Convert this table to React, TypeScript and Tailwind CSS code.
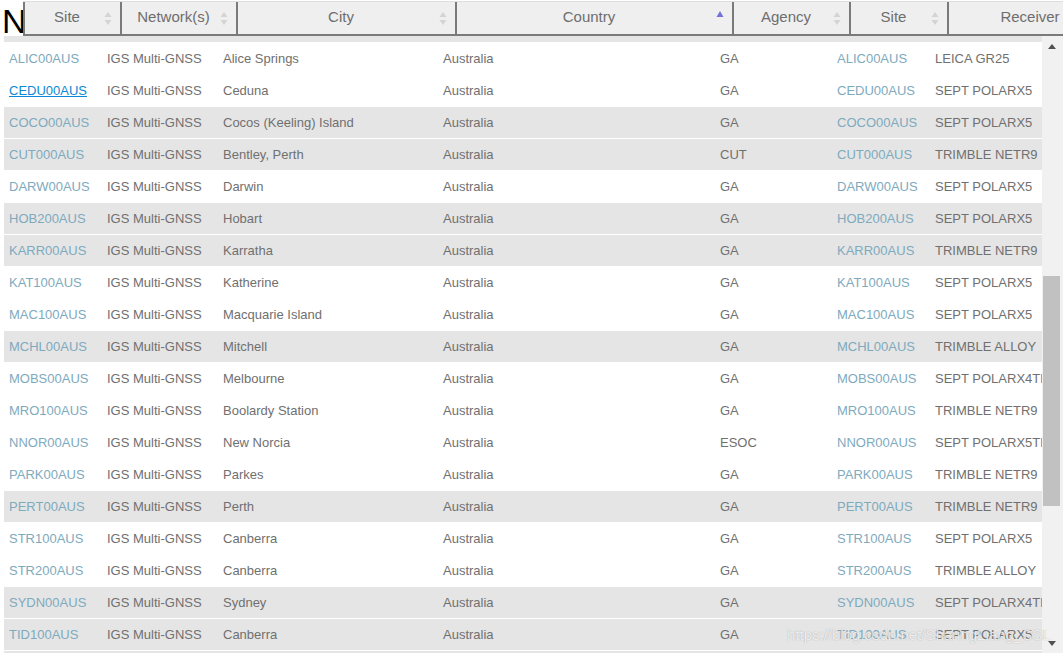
import React from 'react'

type Row = {
  site: string
  city: string
  agency: string
  receiver: string
  shaded: boolean
  hover?: boolean
}

const rows: Row[] = [
  { site: 'ALIC00AUS', city: 'Alice Springs', agency: 'GA', receiver: 'LEICA GR25', shaded: false },
  { site: 'CEDU00AUS', city: 'Ceduna', agency: 'GA', receiver: 'SEPT POLARX5', shaded: false, hover: true },
  { site: 'COCO00AUS', city: 'Cocos (Keeling) Island', agency: 'GA', receiver: 'SEPT POLARX5', shaded: true },
  { site: 'CUT000AUS', city: 'Bentley, Perth', agency: 'CUT', receiver: 'TRIMBLE NETR9', shaded: true },
  { site: 'DARW00AUS', city: 'Darwin', agency: 'GA', receiver: 'SEPT POLARX5', shaded: false },
  { site: 'HOB200AUS', city: 'Hobart', agency: 'GA', receiver: 'SEPT POLARX5', shaded: true },
  { site: 'KARR00AUS', city: 'Karratha', agency: 'GA', receiver: 'TRIMBLE NETR9', shaded: true },
  { site: 'KAT100AUS', city: 'Katherine', agency: 'GA', receiver: 'SEPT POLARX5', shaded: false },
  { site: 'MAC100AUS', city: 'Macquarie Island', agency: 'GA', receiver: 'SEPT POLARX5', shaded: false },
  { site: 'MCHL00AUS', city: 'Mitchell', agency: 'GA', receiver: 'TRIMBLE ALLOY', shaded: true },
  { site: 'MOBS00AUS', city: 'Melbourne', agency: 'GA', receiver: 'SEPT POLARX4TR', shaded: false },
  { site: 'MRO100AUS', city: 'Boolardy Station', agency: 'GA', receiver: 'TRIMBLE NETR9', shaded: false },
  { site: 'NNOR00AUS', city: 'New Norcia', agency: 'ESOC', receiver: 'SEPT POLARX5TR', shaded: false },
  { site: 'PARK00AUS', city: 'Parkes', agency: 'GA', receiver: 'TRIMBLE NETR9', shaded: false },
  { site: 'PERT00AUS', city: 'Perth', agency: 'GA', receiver: 'TRIMBLE NETR9', shaded: true },
  { site: 'STR100AUS', city: 'Canberra', agency: 'GA', receiver: 'SEPT POLARX5', shaded: false },
  { site: 'STR200AUS', city: 'Canberra', agency: 'GA', receiver: 'TRIMBLE ALLOY', shaded: false },
  { site: 'SYDN00AUS', city: 'Sydney', agency: 'GA', receiver: 'SEPT POLARX4TR', shaded: true },
  { site: 'TID100AUS', city: 'Canberra', agency: 'GA', receiver: 'SEPT POLARX5', shaded: true },
]

function SortBoth() {
  return (
    <svg width="8" height="13" viewBox="0 0 8 13" className="absolute right-[8px] top-[10px]">
      <path d="M4 0 L7.5 5 L0.5 5 Z" fill="#d4d4d4" />
      <path d="M4 13 L7.5 8 L0.5 8 Z" fill="#d4d4d4" />
    </svg>
  )
}

function SortAsc() {
  return (
    <svg width="8" height="6" viewBox="0 0 8 6" className="absolute right-[8px] top-[9px]">
      <path d="M4 0 L7.5 6 L0.5 6 Z" fill="#7272d8" />
    </svg>
  )
}

const headers = [
  { label: 'Site', w: 'w-[97px]', sort: 'both' },
  { label: 'Network(s)', w: 'w-[116px]', sort: 'both' },
  { label: 'City', w: 'w-[219px]', sort: 'both' },
  { label: 'Country', w: 'w-[277px]', sort: 'asc' },
  { label: 'Agency', w: 'w-[117px]', sort: 'both' },
  { label: 'Site', w: 'w-[98px]', sort: 'both' },
  { label: 'Receiver', w: 'w-[175px]', sort: 'both' },
]

export default function App() {
  return (
    <div className="relative h-[653px] w-[1063px] overflow-hidden bg-white font-['Liberation_Sans',Arial,sans-serif]">
      {/* header strip */}
      <div className="flex h-[36px] items-start">
        <div className="h-[36px] w-[23px] shrink-0 overflow-hidden pl-[2px] pt-[4px] text-[34px] leading-[34px] text-black">
          N
        </div>
        <div className="mt-[1px] flex h-[35px] shrink-0 border-t border-b-2 border-t-[#dedede] border-b-[#7a7a7a] bg-[#efefef]">
          {headers.map((h, i) => (
            <div
              key={i}
              className={`relative flex h-full shrink-0 items-center justify-center border-l-2 border-[#7a7a7a] pb-[1px] pl-[10px] pr-[21px] text-[15px] text-[#6e6e6e] ${h.w}`}
            >
              {h.label}
              {h.sort === 'asc' ? <SortAsc /> : <SortBoth />}
            </div>
          ))}
        </div>
      </div>

      {/* body */}
      <div className="flex h-[617px]">
        <div className="ml-[4px] w-[1038px] shrink-0 overflow-hidden text-[13px] text-[#707070]">
          <div className="h-[6px] bg-[#e5e5e5]" />
          {rows.map((r) => (
            <div
              key={r.site}
              className={`flex h-[32px] items-center whitespace-nowrap border-t border-white ${r.shaded ? 'bg-[#e5e5e5]' : 'bg-white'}`}
            >
              <div className="w-[99px] shrink-0 pl-[5px]">
                <span className={r.hover ? 'text-[#0e88d4] underline' : 'text-[#7eaabe]'}>{r.site}</span>
              </div>
              <div className="w-[116px] shrink-0 pl-[4px]">IGS Multi-GNSS</div>
              <div className="w-[220px] shrink-0 pl-[4px]">{r.city}</div>
              <div className="w-[277px] shrink-0 pl-[4px]">Australia</div>
              <div className="w-[117px] shrink-0 pl-[4px]">{r.agency}</div>
              <div className="w-[98px] shrink-0 pl-[4px] text-[#7eaabe]">{r.site}</div>
              <div className="w-[140px] shrink-0 pl-[4px]">{r.receiver}</div>
            </div>
          ))}
          <div className="h-[6px] border-t border-white bg-[#e5e5e5]" />
        </div>

        {/* scrollbar */}
        <div className="flex w-[21px] shrink-0 flex-col bg-[#f1f1f1]">
          <div className="flex h-[20px] items-center justify-center pl-[1px] pr-[3px]">
            <svg width="8" height="5" viewBox="0 0 8 5">
              <path d="M4 0 L8 5 L0 5 Z" fill="#505050" />
            </svg>
          </div>
          <div className="h-[220px]" />
          <div className="ml-[1px] h-[230px] w-[17px] bg-[#c1c1c1]" />
          <div className="flex-1" />
          <div className="flex h-[20px] items-center justify-center pl-[1px] pr-[3px]">
            <svg width="8" height="5" viewBox="0 0 8 5">
              <path d="M0 0 L8 0 L4 5 Z" fill="#505050" />
            </svg>
          </div>
        </div>
      </div>

      {/* screenshot watermark */}
      <div className="pointer-events-none absolute left-[787px] top-[624px] text-[15px] text-white/80 [text-shadow:0_0_1px_rgba(120,120,120,0.7)]">
        https://blog.csdn.net/SharingLiang_SSL
      </div>
    </div>
  )
}
